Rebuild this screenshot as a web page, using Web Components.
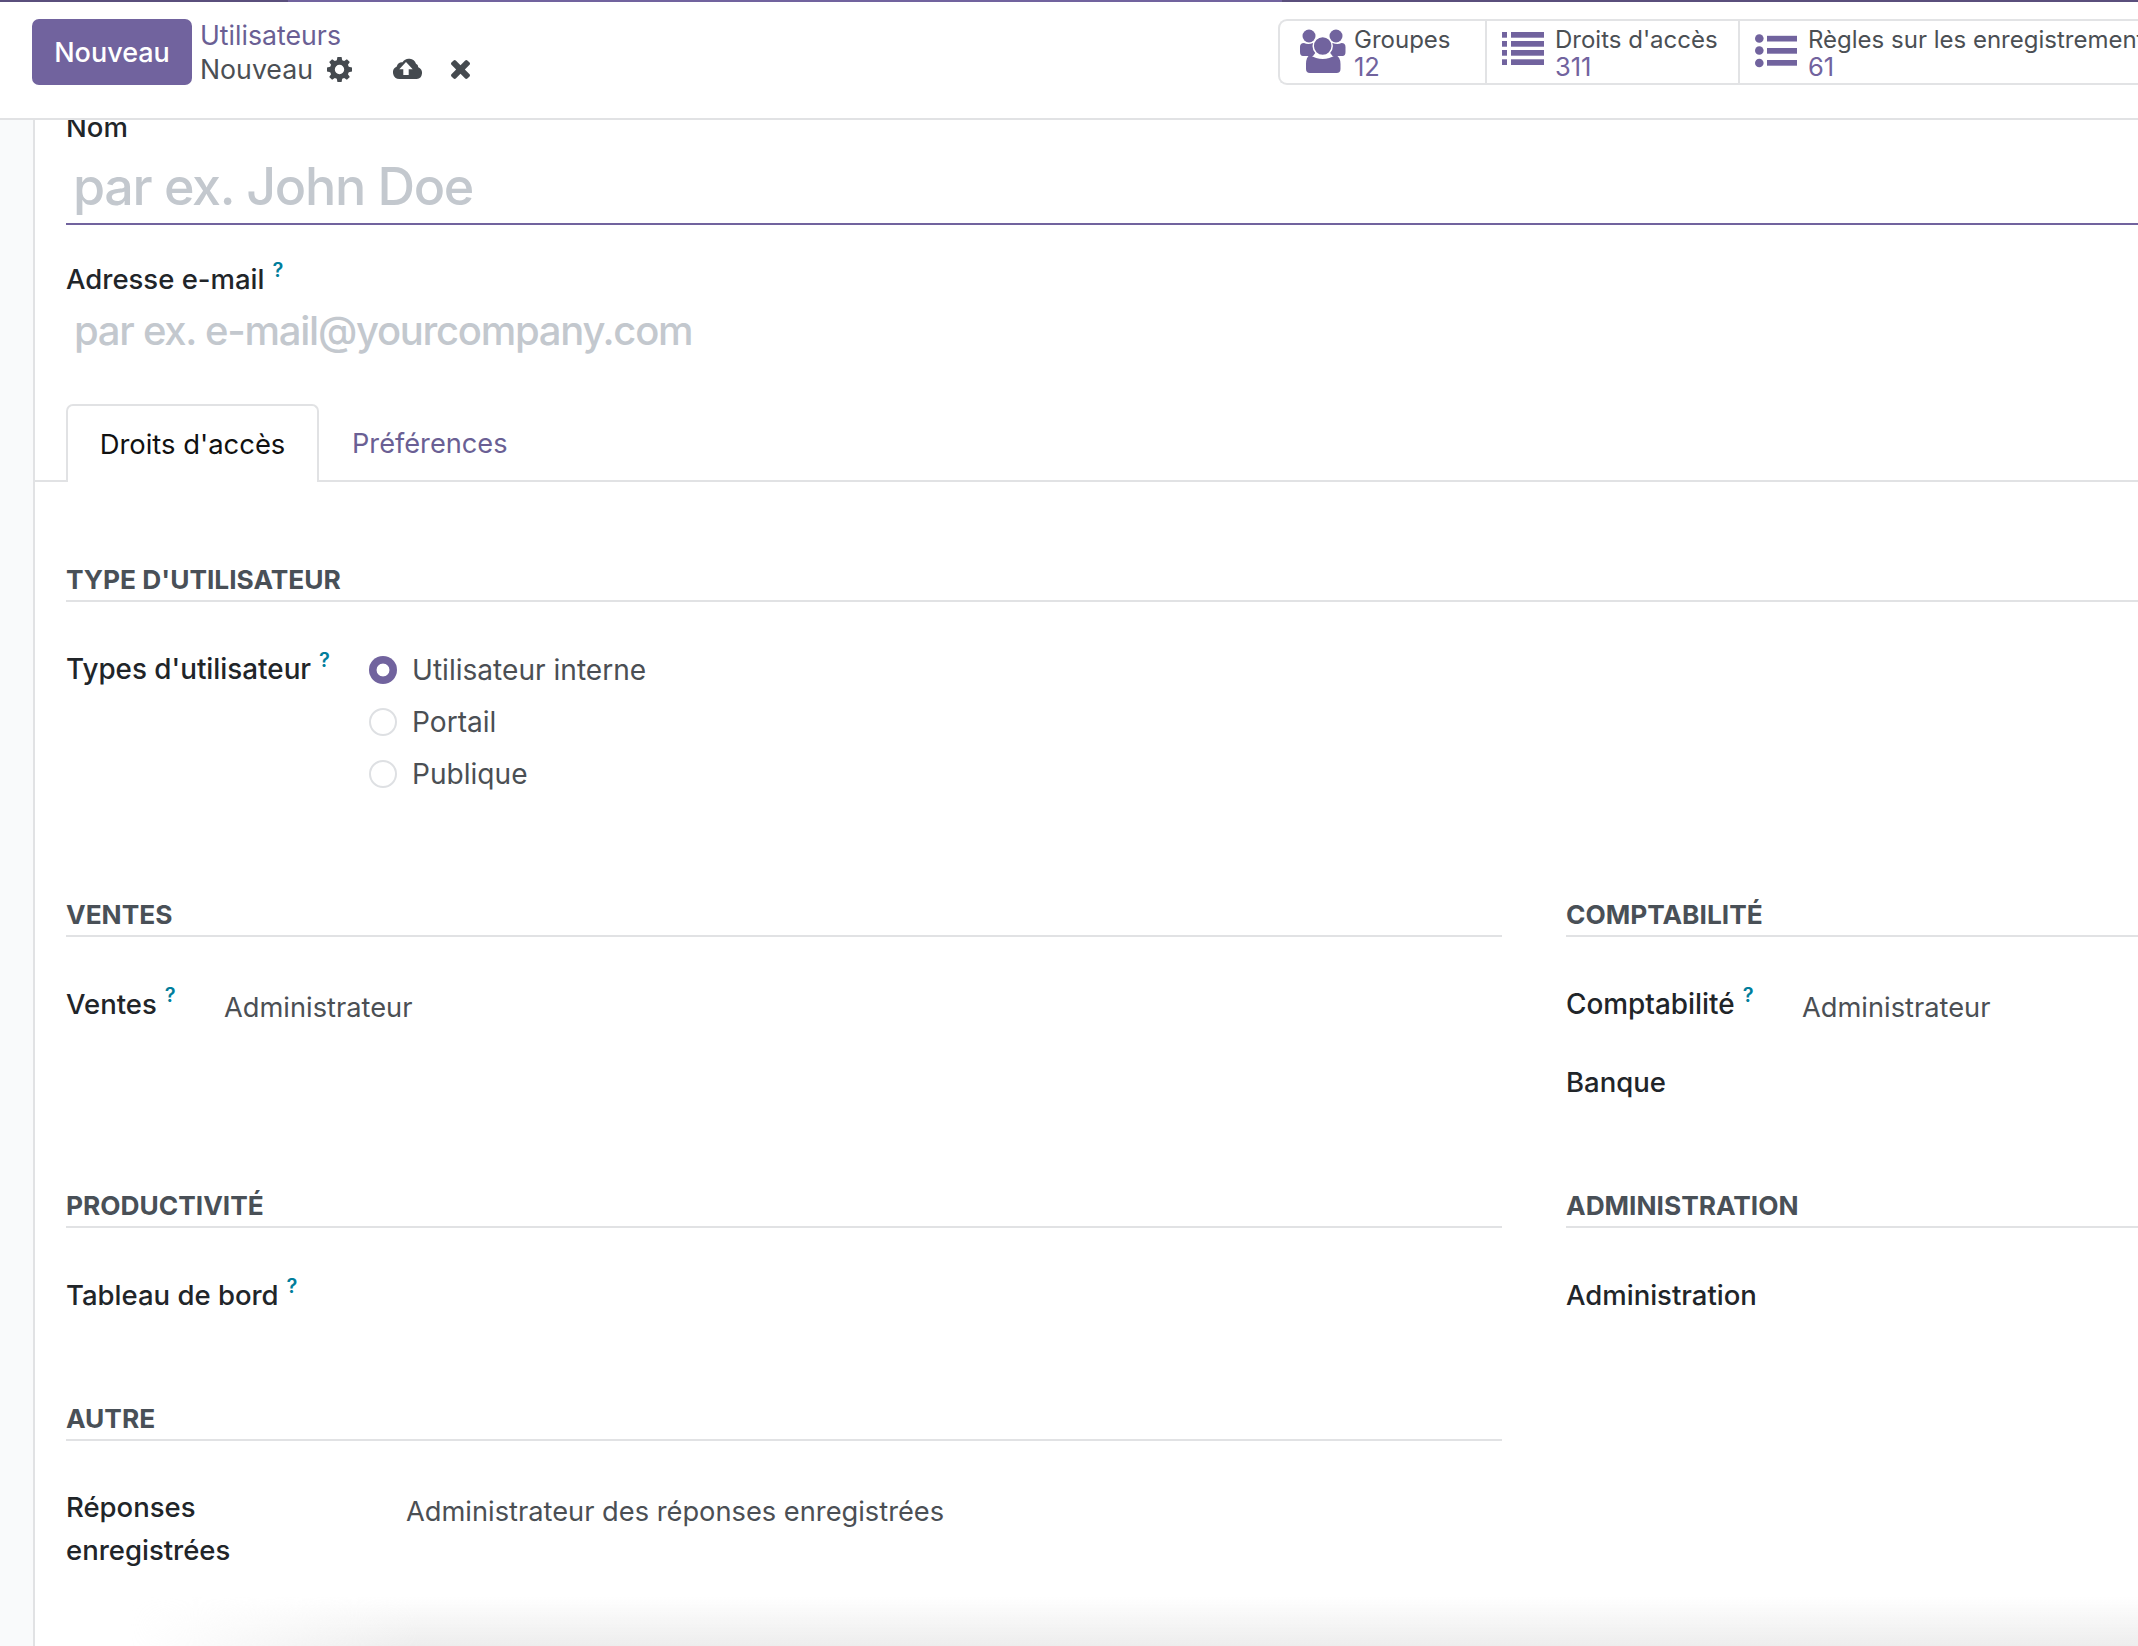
<!DOCTYPE html>
<html lang="fr"><head><meta charset="utf-8"><title>Utilisateurs</title>
<style>
html,body{margin:0;padding:0;height:100%;overflow:hidden;background:#fff}
body{font-family:Inter,"Liberation Sans",sans-serif;font-size:27px;color:#212529;width:2138px;height:1646px}
</style></head><body>
<app-view>
  <app-header></app-header>
  <user-form></user-form>
</app-view>
<script>
const ICONS={
cog:`<svg viewBox="0 0 24 24" width="25" height="25"><path fill="currentColor" fill-rule="evenodd" d="M10 0h4l.6 3.100 1.900.8L19.100 2.100 21.900 4.900l-1.800 2.600.8 1.900L24 10v4l-3.100.6-.8 1.900 1.800 2.600-2.800 2.800-2.600-1.800-1.900.8L14 24h-4l-.6-3.100-1.900-.8-2.600 1.800-2.800-2.800 1.800-2.600-.8-1.900L0 14v-4l3.100-.6.8-1.900L2.100 4.900 4.900 2.100l2.600 1.800 1.900-.8zM12 7.500a4.500 4.500 0 1 0 0 9 4.500 4.500 0 0 0 0-9z"/></svg>`,
cloud:`<svg viewBox="0 0 30 22" width="30" height="22"><path fill="currentColor" fill-rule="evenodd" d="M6.500 22A6.500 6.500 0 0 1 3.800 9.600 5 5 0 0 1 9.500 5.200 7.500 7.500 0 0 1 23 6.800 4 4 0 0 1 25.300 10.200 6.200 6.200 0 0 1 23.800 22zM13 5l-6.700 7.200h4V18h5.400v-5.800h4z"/></svg>`,
times:`<svg viewBox="0 0 1188 1188" width="19" height="19"><path fill="currentColor" d="M1188 956q0 40-28 68l-136 136q-28 28-68 28t-68-28L594 866l-294 294q-28 28-68 28t-68-28L28 1024Q0 996 0 956t28-68l294-294L28 300Q0 272 0 232t28-68L164 28Q192 0 232 0t68 28l294 294L888 28q28-28 68-28t68 28l136 136q28 28 28 68t-28 68L866 594l294 294q28 28 28 68z"/></svg>`,
users:`<svg viewBox="9 8 48 45" width="48" height="45"><g fill="currentColor"><circle cx="19" cy="15" r="6.500"/><circle cx="46" cy="15" r="6.500"/><path d="M10 31v-5q0-4 4-4 4 2 9 0h1q-1 6 2 9l-3 4H13q-3 0-3-4zM55.500 31v-5q0-4-4-4-4 2-9 0h-1q1 6-2 9l3 4h10q3 0 3-4z"/><circle cx="32.700" cy="25" r="9.500" stroke="#fff" stroke-width="1.500"/><path d="M20 34q6 4 12.700 4T45.500 34q5 2 5 9v5q0 4-4 4H20q-4 0-4-4v-5q0-7 4-9z"/></g></svg>`,
list:`<svg viewBox="0 0 42 33" width="42" height="33"><g fill="currentColor"><rect x="0" y="0" width="5" height="5.700"/><rect x="0" y="9" width="5" height="5.700"/><rect x="0" y="18" width="5" height="5.700"/><rect x="0" y="27.300" width="5" height="5.700"/><rect x="9" y="0" width="33" height="5.700"/><rect x="9" y="9" width="33" height="5.700"/><rect x="9" y="18" width="33" height="5.700"/><rect x="9" y="27.300" width="33" height="5.700"/></g></svg>`,
tasks:`<svg viewBox="0 0 42 34" width="42" height="34"><g fill="currentColor"><circle cx="4.300" cy="4.500" r="4.300"/><circle cx="4.300" cy="16.500" r="4.300"/><circle cx="4.300" cy="29" r="4.300"/><rect x="12" y="1.800" width="30" height="5.700"/><rect x="12" y="14" width="30" height="5.700"/><rect x="12" y="26" width="30" height="5.700"/></g></svg>`
};
function def(name,css,html,init){
  customElements.define(name,class extends HTMLElement{
    constructor(){super();this.attachShadow({mode:'open'}).innerHTML=`<style>${css}</style>${typeof html==='function'?html(this):html}`;}
    connectedCallback(){
      if(init&&!this._i){this._i=1;init(this);}
    }
  });
}
def('app-view',`:host{display:flex;flex-direction:column;width:2138px;height:1646px;overflow:hidden;position:relative;background:#fff}
.shade{position:absolute;left:0;right:0;bottom:0;height:50px;pointer-events:none;
background:linear-gradient(to bottom,rgba(235,235,235,0),rgba(235,235,235,.9));
-webkit-mask-image:linear-gradient(to right,transparent 130px,#000 420px);mask-image:linear-gradient(to right,transparent 130px,#000 420px)}`,
`<slot></slot><div class="shade"></div>`);

def('icon-glyph',`:host{display:inline-flex;align-items:center;justify-content:center;flex:none}`,'',el=>{el.shadowRoot.innerHTML+=ICONS[el.getAttribute('name')];});

def('stat-button',`:host{display:flex;box-sizing:border-box;height:100%;align-items:flex-start;padding:5px 0 0 var(--pl,20px);width:var(--w);flex:none;border-right:2px solid #e2e3e5;white-space:nowrap;color:#71639e}
.ic{width:var(--iw,50px);margin-right:var(--ir,4px);padding-top:var(--it,8px);display:flex;justify-content:flex-start;flex:none}
.t{font-size:24px;line-height:27px;color:#4b4f54}
.n{font-size:25.500px;line-height:27px;color:#71639e}`,
el=>`<div class="ic"><icon-glyph name="${el.getAttribute('icon')}"></icon-glyph></div><div><div class="t">${el.getAttribute('label')}</div><div class="n">${el.getAttribute('count')}</div></div>`);

def('app-header',`:host{display:flex;flex-direction:column;box-sizing:border-box;height:120px;flex:none;background:#fff;border-bottom:2px solid #e1e2e4;position:relative;z-index:2;overflow:hidden}
.strip{display:flex;height:2px;flex:none;background:#71639e}
.strip i{display:block;height:2px;background:#5a4f7c}
.strip i:first-child{width:288px}
.strip i:last-child{margin-left:auto;width:856px}
.row{display:flex;flex:1;min-height:0;align-items:flex-start}
.btn{margin:17px 0 0 32px;width:160px;height:66px;flex:none;background:#71639e;color:#fff;border-radius:7px;display:flex;align-items:center;justify-content:center;font-size:27px;font-weight:500}
.crumb{margin:16px 0 0 8px;flex:none;font-size:26.700px;line-height:34px}
.a{color:#6a5f94}
.b{color:#4b4f54;display:flex;align-items:center;height:34px}
.b span{width:113px}
.b icon-glyph{color:#454a4f}
.stats{margin:17px 0 0 auto;width:860px;height:66px;box-sizing:border-box;border:2px solid #e2e3e5;border-right:0;border-radius:9px 0 0 9px;display:flex;overflow:hidden;flex:none}`,
`<div class="strip"><i></i><i></i></div>
<div class="row"><div class="btn">Nouveau</div>
<div class="crumb"><div class="a">Utilisateurs</div><div class="b"><span>Nouveau</span>
<icon-glyph name="cog" style="margin-left:14px"></icon-glyph><icon-glyph name="cloud" style="margin-left:41px;margin-top:-2px"></icon-glyph><icon-glyph name="times" style="margin-left:28px"></icon-glyph></div></div>
<div class="stats">
<stat-button icon="users" label="Groupes" count="12" style="--w:207px;--pl:19px;--iw:48px;--ir:7px;--it:3px"></stat-button>
<stat-button icon="list" label="Droits d'accès" count="311" style="--w:253px;--pl:15px;--iw:42px;--ir:11px;--it:6px"></stat-button>
<stat-button icon="tasks" label="Règles sur les enregistrements" count="61" style="--w:420px;--pl:15px;--iw:42px;--ir:11px;--it:8px"></stat-button>
</div></div>`);

def('help-mark',`:host{display:inline-block;color:#017e9c;font-size:20px;font-weight:600;line-height:1;position:relative;top:-12px;margin-left:8px}`,`?`);

def('field-label',`:host{display:block;color:#212529;font-size:var(--fs,27.500px);line-height:43px;font-weight:500}`,`<slot></slot>`);

def('radio-option',`:host{display:flex;align-items:center;height:52px;color:#4b4f54;font-size:28.100px}
.r{width:24px;height:24px;border:2px solid #dee0e3;border-radius:50%;margin-right:15px;flex:none;background:#fff}
:host([checked]) .r{border:0;width:28px;height:28px;background:radial-gradient(circle,#fff 0 6px,#71639e 6.800px)}`,
`<div class="r"></div><slot></slot>`);

def('group-section',`:host{display:block}
h3{margin:0;font-size:26.300px;line-height:38px;font-weight:700;color:#495057;text-transform:uppercase;border-bottom:2px solid #e1e2e4;padding-bottom:1px;height:38px}
.body{padding-top:var(--pt,46px)}`,
el=>`<h3>${el.getAttribute('title')}</h3><div class="body"><slot></slot></div>`);

def('field-row',`:host{display:flex;align-items:flex-start;min-height:var(--h,43px)}
.l{width:var(--lw,320px);flex:none}
.v{color:#4b4f54;font-size:27.250px;line-height:43px;padding-top:var(--vt,0px)}`,
`<div class="l"><slot name="label"></slot></div><div class="v"><slot></slot></div>`);

def('tab-bar',`:host{display:flex;height:78px;box-sizing:border-box;border-bottom:2px solid #e1e2e4;padding-left:31px}
.on{width:253px;height:78px;box-sizing:border-box;border:2px solid #e1e2e4;border-bottom:0;border-radius:7px 7px 0 0;background:#fff;color:#111;display:flex;align-items:center;justify-content:center;font-size:27.400px}
.off{margin-left:33px;color:#6a5f94;display:flex;align-items:center;font-size:27.200px;height:78px}`,
`<div class="on">Droits d'accès</div><div class="off">Préférences</div>`);

def('user-form',`:host{display:flex;flex:1;min-height:0;overflow:hidden;background:#f9fafb}
.sheet{margin-left:33px;flex:1;min-width:0;background:#fff;border-left:2px solid #e1e2e4;overflow:hidden}
.top{padding:0 0 0 31px;margin-top:-12px}
.nom{height:39px;line-height:38px;font-size:27.500px;font-weight:500;color:#212529}
.name{height:76px;border-bottom:2px solid #71639e;font-size:52px;font-weight:450;letter-spacing:-1.300px;line-height:80px;color:#c3c8ce;padding-left:7px}
.mail{margin-top:33px}
.ph{font-size:40px;font-weight:450;letter-spacing:-1.270px;line-height:50px;color:#c3c8ce;padding-left:8px;margin-top:5px}
.tabs{margin-top:48px}
.pane{padding:79px 0 0 31px;width:3000px}
.types{margin-top:42px;display:flex}
.types .tl{width:303px;flex:none;--fs:27.800px}
.grid{display:grid;grid-template-columns:1436px 1436px;column-gap:64px;margin-top:96px;align-items:start}`,
`<div class="sheet">
<div class="top">
<div class="nom">Nom</div>
<div class="name">par ex. John Doe</div>
<div class="mail"><field-label>Adresse e-mail<help-mark></help-mark></field-label></div>
<div class="ph">par ex. e-mail@yourcompany.com</div>
</div>
<div class="tabs"><tab-bar></tab-bar></div>
<div class="pane">
<group-section title="Type d'utilisateur" style="--pt:0px"></group-section>
<div class="types"><div class="tl"><field-label style="padding-top:4px">Types d'utilisateur<help-mark></help-mark></field-label></div>
<div><radio-option checked>Utilisateur interne</radio-option><radio-option>Portail</radio-option><radio-option>Publique</radio-option></div></div>
<div class="grid">
<group-section title="Ventes" style="height:291px"><field-row style="--lw:158px;--vt:3px"><field-label slot="label">Ventes<help-mark></help-mark></field-label>Administrateur</field-row></group-section>
<group-section title="Comptabilité" style="height:291px"><field-row style="--lw:236px;--vt:3px;--h:78px"><field-label slot="label" style="--fs:27.900px">Comptabilité<help-mark></help-mark></field-label>Administrateur</field-row><field-row><field-label slot="label">Banque</field-label></field-row></group-section>
<group-section title="Productivité" style="height:213px"><field-row><field-label slot="label">Tableau de bord<help-mark></help-mark></field-label></field-row></group-section>
<group-section title="Administration" style="height:213px"><field-row><field-label slot="label">Administration</field-label></field-row></group-section>
<group-section title="Autre" style="--pt:45px"><field-row style="--lw:340px;--vt:4px"><field-label slot="label" style="width:240px">Réponses enregistrées</field-label>Administrateur des réponses enregistrées</field-row></group-section>
</div></div></div>`);
</script>
</body></html>
